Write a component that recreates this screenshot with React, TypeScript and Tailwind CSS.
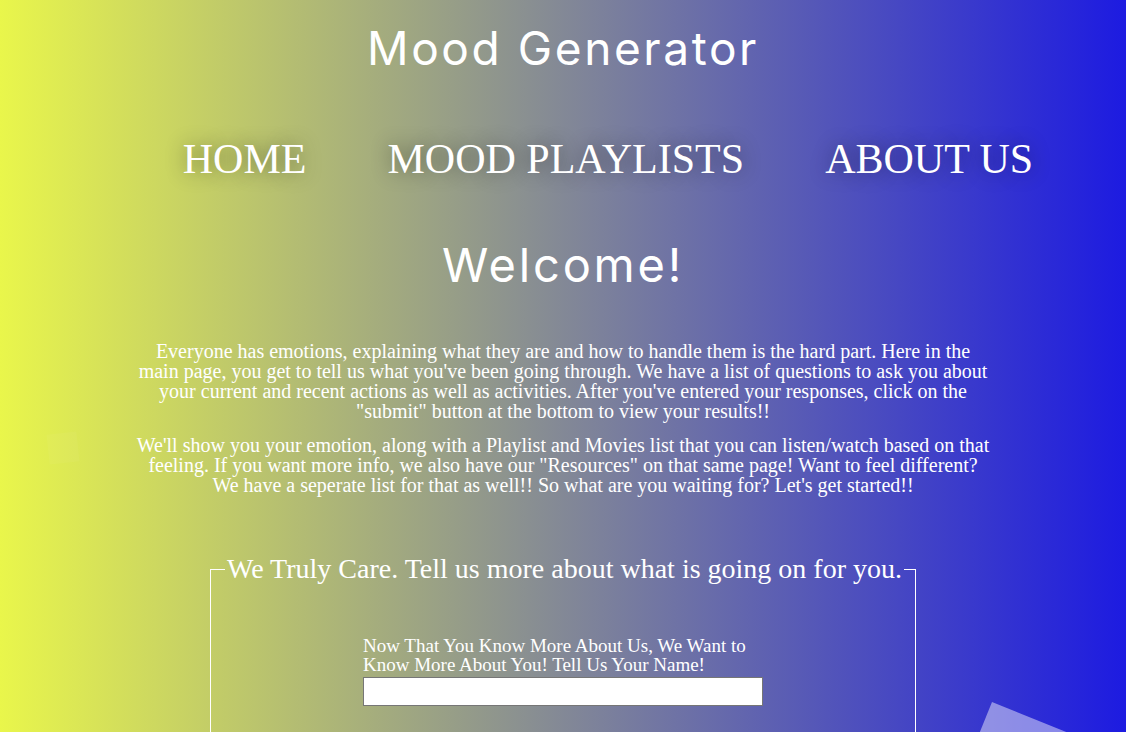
export default function App() {
  const navItems = ["HOME", "MOOD PLAYLISTS", "ABOUT US"];

  return (
    <div className="relative h-screen overflow-hidden bg-[linear-gradient(to_right,#e9f64b,#1d1be1)] text-white font-['Liberation_Serif',serif]">
      {/* floating squares in the background */}
      <div className="absolute left-[48px] top-[433px] w-[30px] h-[30px] bg-white/[0.04] -rotate-6" />
      <div className="absolute left-[992px] top-[702px] w-[140px] h-[140px] bg-white/45 origin-top-left rotate-[22deg]" />

      <header className="relative pt-[20px] text-center">
        <h1 className="font-['Inter',sans-serif] text-[46px] leading-[56px] font-normal tracking-[2.6px]">
          Mood Generator
        </h1>
      </header>

      <nav className="relative mt-[59px]">
        <ul className="flex justify-center gap-[81px] pl-[90px]">
          {navItems.map((item) => (
            <li key={item}>
              <a
                href="#"
                className="text-[42px] leading-[48px] [text-shadow:0_0_20px_rgba(0,0,0,0.45)]"
              >
                {item}
              </a>
            </li>
          ))}
        </ul>
      </nav>

      <main className="relative">
        <h2 className="mt-[54px] text-center font-['Inter',sans-serif] text-[47px] leading-[56px] font-normal tracking-[2.8px]">
          Welcome!
        </h2>

        <div className="mx-auto mt-[48px] w-[856px] text-center text-[20px] leading-[20px]">
          <p>
            Everyone has emotions, explaining what they are and how to handle
            them is the hard part. Here in the main page, you get to tell us
            what you've been going through. We have a list of questions to ask
            you about your current and recent actions as well as activities.
            After you've entered your responses, click on the "submit" button
            at the bottom to view your results!!
          </p>
          <p className="mt-[14px]">
            We'll show you your emotion, along with a Playlist and Movies list
            that you can listen/watch based on that feeling. If you want more
            info, we also have our "Resources" on that same page! Want to feel
            different? We have a seperate list for that as well!! So what are
            you waiting for? Let's get started!!
          </p>
        </div>

        <form className="mt-[53px]">
          <fieldset className="mx-auto w-[706px] border border-white pl-[14px] pr-[10px] pb-[200px]">
            <legend className="whitespace-nowrap px-[2px] text-[28px]">
              We Truly Care. Tell us more about what is going on for you.
            </legend>
            <div className="ml-[138px] mt-[46px] w-[400px]">
              <label
                htmlFor="name"
                className="block text-[19px] leading-[19px]"
              >
                Now That You Know More About Us, We Want to Know More About
                You! Tell Us Your Name!
              </label>
              <input
                id="name"
                type="text"
                className="mt-[3px] block h-[29px] w-[400px] border border-[#767676] bg-white px-1 text-black"
              />
            </div>
          </fieldset>
        </form>
      </main>
    </div>
  );
}
